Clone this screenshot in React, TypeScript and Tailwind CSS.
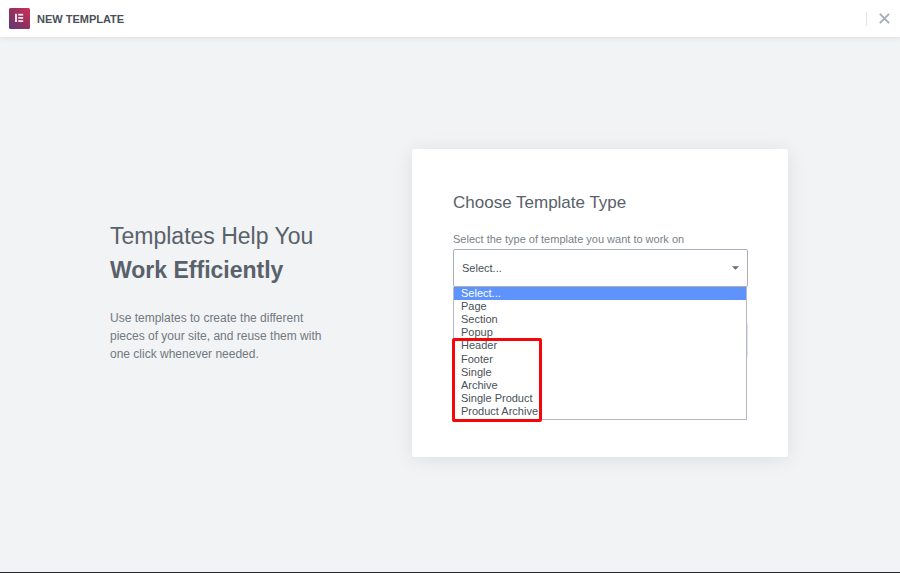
import { useState } from 'react';

const TEMPLATE_TYPES = [
  'Select...',
  'Page',
  'Section',
  'Popup',
  'Header',
  'Footer',
  'Single',
  'Archive',
  'Single Product',
  'Product Archive',
];

const Logo = () => (
  <svg viewBox="0 0 21 21" className="w-[21px] h-[21px]" aria-hidden="true">
    <defs>
      <linearGradient id="logo-bg" x1="0" y1="1" x2="1" y2="0">
        <stop offset="0" stopColor="#5c3a73" />
        <stop offset="0.5" stopColor="#94305f" />
        <stop offset="1" stopColor="#cf2f55" />
      </linearGradient>
    </defs>
    <rect width="21" height="21" rx="1.5" fill="url(#logo-bg)" />
    <g fill="#f8e4ec">
      <rect x="6" y="5.8" width="2" height="8.2" />
      <rect x="9.2" y="5.8" width="5" height="1.8" />
      <rect x="9.2" y="9" width="5" height="1.8" />
      <rect x="9.2" y="12.2" width="5" height="1.8" />
    </g>
  </svg>
);

const TopBar = () => (
  <header className="flex items-center justify-between h-[37px] pl-[9px] pr-[10px] bg-white shadow-[0_0_6px_rgba(0,0,0,0.12)]">
    <div className="flex items-center gap-[7px]">
      <Logo />
      <h1 className="text-[11px] leading-4 font-bold text-[#495157]">NEW TEMPLATE</h1>
    </div>
    <div className="flex items-center">
      <span className="w-px h-[14px] mr-3 bg-[#e3e6e9]" />
      <button type="button" aria-label="Close" className="cursor-pointer">
        <svg viewBox="0 0 11 11" className="block w-[11px] h-[11px]">
          <path d="M0.9 0.9L10.1 10.1M10.1 0.9L0.9 10.1" stroke="#a6aeb5" strokeWidth="1.9" fill="none" />
        </svg>
      </button>
    </div>
  </header>
);

interface TypeFieldProps {
  value: string;
  onChange: (value: string) => void;
}

const TypeField = ({ value, onChange }: TypeFieldProps) => (
  <div className="relative mt-0.5">
    <select
      id="template-type"
      value={value}
      onChange={(e) => onChange(e.target.value)}
      className="block w-full h-[38px] px-2 pt-0.5 appearance-none bg-white border border-[#a9b0ba] rounded-xs text-[11px] text-[#495157] outline-none"
    >
      {TEMPLATE_TYPES.map((type) => (
        <option key={type}>{type}</option>
      ))}
    </select>
    <svg
      viewBox="0 0 7 4"
      className="absolute right-[9px] top-[17px] w-[7px] h-[4px] pointer-events-none"
      aria-hidden="true"
    >
      <path d="M0 0.2H7L3.5 3.8Z" fill="#666c72" />
    </svg>

    <div className="absolute left-0 right-px top-full">
      <ul
        role="listbox"
        aria-label="Template Type"
        className="flex flex-col justify-between h-[133px] bg-white border-x border-b border-[#b4bac8]"
      >
        {TEMPLATE_TYPES.map((type) => (
          <li
            key={type}
            role="option"
            aria-selected={type === value}
            onClick={() => onChange(type)}
            className={`px-[7px] text-[11px] leading-[13px] cursor-default ${
              type === value ? 'bg-[#5e93fb] text-white' : 'text-[#495157]'
            }`}
          >
            {type}
          </li>
        ))}
      </ul>
      {/* marks the theme builder types */}
      <div className="absolute -left-px -bottom-0.5 w-[90px] h-[84px] border-3 border-[#f5060b] rounded-xs pointer-events-none" />
    </div>
  </div>
);

export default function App() {
  const [type, setType] = useState(TEMPLATE_TYPES[0]);

  return (
    <div className="flex flex-col min-h-screen bg-[#f1f3f5] border-b border-[#2a292d] font-['Liberation_Sans',Arial,sans-serif]">
      <TopBar />

      <main className="flex flex-1 items-center justify-center pr-0.5 pb-1">
        <section className="w-[302px] pb-6">
          <h2 className="text-[23px] leading-[34px] text-[#59616a]">
            Templates Help You
            <br />
            <strong className="font-bold">Work Efficiently</strong>
          </h2>
          <p className="mt-[22px] max-w-[220px] text-[12px] leading-[18px] text-[#72797f]">
            Use templates to create the different pieces of your site, and reuse them with one click
            whenever needed.
          </p>
        </section>

        <form
          onSubmit={(e) => e.preventDefault()}
          className="w-[376px] pl-[41px] pr-10 pt-[42px] pb-[99px] bg-white rounded-xs shadow-[0_2px_20px_rgba(0,0,0,0.09)]"
        >
          <h2 className="text-[17px] leading-6 text-[#59616a]">Choose Template Type</h2>
          <label
            htmlFor="template-type"
            className="block mt-4 text-[11px] leading-4 text-[#7b8187]"
          >
            Select the type of template you want to work on
          </label>
          <TypeField value={type} onChange={setType} />
          <div className="mt-[35px] h-9 bg-[#dde1e9] rounded-xs" />
        </form>
      </main>
    </div>
  );
}
